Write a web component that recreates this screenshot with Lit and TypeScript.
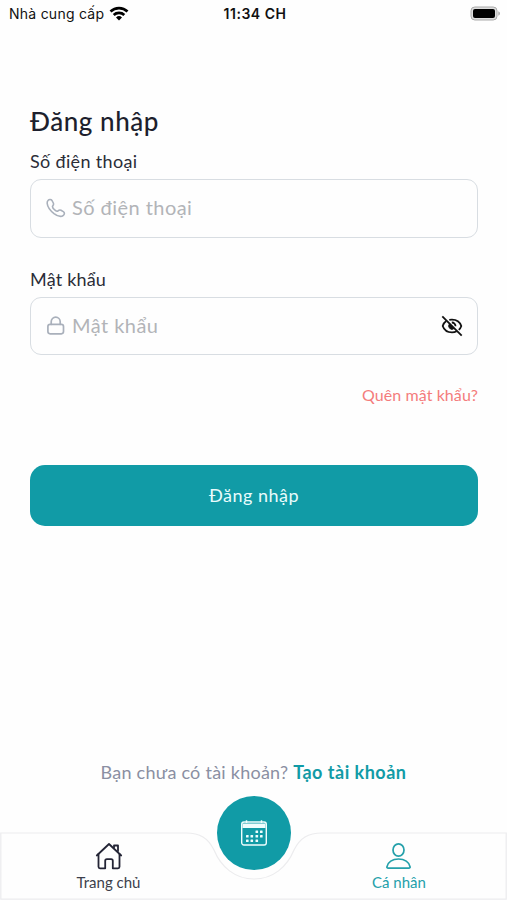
import { LitElement, html, css, svg } from "lit";
import { customElement } from "lit/decorators.js";

const phoneIcon = html`<svg class="field-icon" viewBox="0 0 20 20" fill="none" stroke="currentColor" stroke-width="1.600" stroke-linejoin="round" stroke-linecap="round">
  <path d="M2 2.500C3 1.300 5 1 6 2.500L7.300 5C8 6.300 7.500 7 6.700 8C6.100 9 7.500 10.900 9 12.100C10.200 13.100 11.200 13.600 12 12.900C13 12 13.700 11.700 15 12.300L17.300 13.600C18.800 14.500 18.600 16.300 17.400 17.300C15.500 18.900 12 18.600 8 15.600C4 12.400 1.500 8.500 1.200 5.500C1.100 4 1.300 3.200 2 2.500Z"/>
</svg>`;

const lockIcon = html`<svg class="field-icon" viewBox="0 0 20 20" fill="none" stroke="currentColor" stroke-width="1.700" stroke-linejoin="round" stroke-linecap="round">
  <rect x="1.900" y="8.300" width="15.600" height="9.500" rx="2.200"/>
  <path d="M5.200 8.300V5.700a4.500 4.500 0 0 1 9 0v2.600"/>
</svg>`;

const eyeOffIcon = html`<svg class="eye" viewBox="0 0 22 22" fill="none" stroke="currentColor" stroke-width="1.800">
  <path d="M5.200 6C3.500 7.200 2.300 9 1.700 11c1.300 3.800 5 6.400 9.300 6.400 1.700 0 3.300-.4 4.700-1.100M8.300 4.900A11 11 0 0 1 11 4.600c4.300 0 8 2.600 9.300 6.400a9 9 0 0 1-2.500 3.900"/>
  <path d="M8.200 9.200A3.300 3.300 0 0 0 12.700 13.800z" fill="currentColor" stroke-width="1"/>
  <path d="M10.800 7.500a3.600 3.600 0 0 1 3.700 3.700"/>
  <path d="M1.300 1.300l19.400 19.400"/>
</svg>`;

const homeIcon = html`<svg class="nav-icon" viewBox="0 0 28 28" fill="none" stroke="currentColor" stroke-width="1.800" stroke-linejoin="round" stroke-linecap="round">
  <path d="M1.800 13.500 14 2l12.200 11.500"/>
  <path d="M3.500 12v12.800a1.500 1.500 0 0 0 1.500 1.500h5.200v-7.500a1.700 1.700 0 0 1 1.700-1.700h4.200a1.700 1.700 0 0 1 1.700 1.700v7.500h5.200a1.500 1.500 0 0 0 1.500-1.500V12"/>
  <path d="M19 5.500V3.500h4v5.500"/>
</svg>`;

const userIcon = html`<svg class="nav-icon" viewBox="0 0 28 28" fill="none" stroke="currentColor" stroke-width="1.700" stroke-linejoin="round">
  <ellipse cx="13.500" cy="8" rx="5.500" ry="6.200"/>
  <path d="M3.100 26.200a1.200 1.200 0 0 1-1.200-1.400C2.700 20 7.500 17 13.500 17S24.300 20 25.100 24.800a1.200 1.200 0 0 1-1.200 1.400z"/>
</svg>`;

const dots = [
  [15.5, 11.5], [20, 11.5],
  [6, 16], [10.500, 16], [15.5, 16], [20, 16],
  [6, 20.500], [10.500, 20.500], [15.5, 20.500],
];

const calendarIcon = html`<svg class="calendar" viewBox="0 0 26 26">
  <rect x=".7" y="2" width="24.600" height="23" rx="2.200" fill="none" stroke="currentColor" stroke-width="1.400"/>
  <rect x="1.500" y="3.500" width="23" height="4.500" fill="currentColor"/>
  <path d="M5.500.3V3M20.500.3V3" stroke="currentColor" stroke-width="1.500"/>
  ${dots.map(([x, y]) => svg`<rect x=${x - 1} y=${y - 1} width="2.600" height="2.600" rx=".5" fill="currentColor"/>`)}
</svg>`;

@customElement("app-root")
export class AppRoot extends LitElement {
  static styles = css`
    :host {
      display: flex;
      flex-direction: column;
      box-sizing: border-box;
      width: 100%;
      height: 900px;
      overflow: hidden;
      background: #fefefe;
      color: #1d1f2d;
      font-family: Lato, "Noto Sans", sans-serif;
    }
    svg { display: block; flex: none; }
    .status {
      display: grid;
      grid-template-columns: 1fr auto 1fr;
      align-items: center;
      height: 27px;
      padding: 0 6px 0 9px;
      font-family: Inter, sans-serif;
      font-size: 14px;
      color: #111;
    }
    .carrier { display: flex; align-items: center; gap: 5px; letter-spacing: 0.25px; }
    .wifi { width: 20px; height: 15px; }
    .time { font-weight: 600; letter-spacing: 0.5px; }
    .battery { justify-self: end; width: 31px; height: 15px; }
    .form { display: flex; flex-direction: column; padding: 75px 29px 0 30px; }
    h1 { margin: 0; font-size: 26px; line-height: 38px; font-weight: 500; letter-spacing: 0.55px; }
    .label { margin-top: 8px; font-size: 18px; line-height: 26px; height: 26px; letter-spacing: 0.33px; color: #2b2d38; }
    .field {
      display: flex;
      align-items: center;
      box-sizing: border-box;
      height: 58.5px;
      margin-top: 5px;
      padding: 0 14px 0 15px;
      border: 1.500px solid #d8dde2;
      border-radius: 11px;
      color: #a9b0bb;
    }
    .field-icon { width: 20px; height: 20px; }
    .placeholder { flex: 1; margin-left: 6px; padding-bottom: 2px; font-size: 20px; line-height: 30px; letter-spacing: 0.45px; color: #b2b4b8; }
    .eye { width: 22px; height: 22px; color: #111; }
    .label.second { margin-top: 28px; letter-spacing: 0.2px; }
    .forgot { align-self: flex-end; margin-top: 28px; font-size: 16px; line-height: 24px; letter-spacing: 0.08px; color: #f47c7c; }
    .submit {
      height: 61px;
      margin: 58px 0 0;
      border: 0;
      border-radius: 15px;
      background: #119ba6;
      color: #e9fbfc;
      font: 18px/61px Lato, "Noto Sans", sans-serif;
      letter-spacing: 0.5px;
      padding: 0;
    }
    .signup { margin-top: auto; text-align: center; font-size: 18px; line-height: 28px; letter-spacing: 0.25px; color: #8a8fa2; }
    .signup b { color: #119ba6; font-weight: 700; letter-spacing: 0.5px; }
    .nav { position: relative; height: 114px; flex: none; }
    .outline { position: absolute; inset: 0; width: 100%; height: 114px; }
    .tabs { position: relative; display: grid; grid-template-columns: 217px 74px 216px; height: 114px; }
    .tab { display: flex; flex-direction: column; align-items: center; padding-top: 56px; font-size: 15px; line-height: 22px; color: #3c3e4b; }
    .tab .nav-icon { color: #242536; }
    .tab.active, .tab.active .nav-icon { color: #24a0aa; }
    .nav-icon { width: 28px; height: 28px; margin-bottom: 1px; }
    .fab {
      display: flex;
      align-items: center;
      justify-content: center;
      width: 74px;
      height: 74px;
      margin-top: 10px;
      border-radius: 50%;
      background: #119ba6;
      color: #effdfd;
    }
    .calendar { width: 26px; height: 26px; }
  `;

  render() {
    return html`
      <div class="status">
        <div class="carrier"><span>Nhà cung cấp</span>
          <svg class="wifi" viewBox="0 0 20 15" fill="none" stroke="#000" stroke-width="2.700">
            <path d="M1.500 5.600a12.300 12.300 0 0 1 17 0M4.700 9a7.700 7.700 0 0 1 10.600 0"/>
            <path d="M10 14.500 7 11.500a4.300 4.300 0 0 1 6 0z" fill="#000" stroke="none"/>
          </svg>
        </div>
        <span class="time">11:34 CH</span>
        <svg class="battery" viewBox="0 0 31 15">
          <rect x="1" y="1" width="26" height="13" rx="3.800" fill="#dedede" stroke="#aaa"/>
          <rect x="3" y="3" width="22" height="9" rx="2" fill="#000"/>
          <path d="M28.300 5.300c2.200.8 2.200 3.600 0 4.400z" fill="#aaa"/>
        </svg>
      </div>
      <div class="form">
        <h1>Đăng nhập</h1>
        <span class="label">Số điện thoại</span>
        <div class="field">${phoneIcon}<span class="placeholder">Số điện thoại</span></div>
        <span class="label second">Mật khẩu</span>
        <div class="field">${lockIcon}<span class="placeholder">Mật khẩu</span>${eyeOffIcon}</div>
        <span class="forgot">Quên mật khẩu?</span>
        <button class="submit">Đăng nhập</button>
      </div>
      <div class="signup">Bạn chưa có tài khoản? <b>Tạo tài khoản</b></div>
      <div class="nav">
        <svg class="outline" viewBox="0 0 507 114" fill="none" stroke="#ececee" stroke-width="1.200">
          <path d="M.8 113.200V47H186c14 0 22 5 28 17 7 17 21 29 40 29s33-12 40-29c6-12 14-17 28-17H506.200V113.200z"/>
        </svg>
        <div class="tabs">
          <div class="tab">${homeIcon}<span>Trang chủ</span></div>
          <div class="fab">${calendarIcon}</div>
          <div class="tab active">${userIcon}<span>Cá nhân</span></div>
        </div>
      </div>
    `;
  }
}
